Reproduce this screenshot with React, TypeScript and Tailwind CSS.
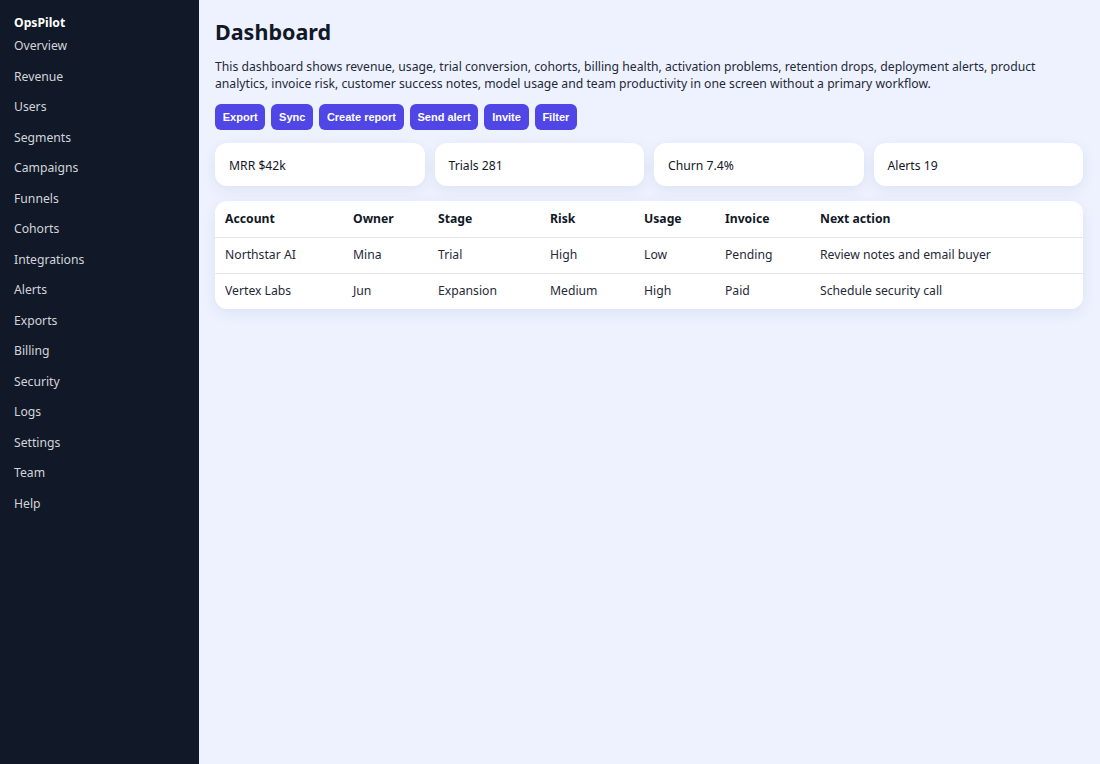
import React from "react";

const navItems = [
  "Overview",
  "Revenue",
  "Users",
  "Segments",
  "Campaigns",
  "Funnels",
  "Cohorts",
  "Integrations",
  "Alerts",
  "Exports",
  "Billing",
  "Security",
  "Logs",
  "Settings",
  "Team",
  "Help",
];

const actions = ["Export", "Sync", "Create report", "Send alert", "Invite", "Filter"];

const stats = ["MRR $42k", "Trials 281", "Churn 7.4%", "Alerts 19"];

// header label + column width (last one takes the rest)
const columns: [string, string][] = [
  ["Account", "w-[128px]"],
  ["Owner", "w-[85px]"],
  ["Stage", "w-[112px]"],
  ["Risk", "w-[94px]"],
  ["Usage", "w-[81px]"],
  ["Invoice", "w-[95px]"],
  ["Next action", ""],
];

const rows = [
  ["Northstar AI", "Mina", "Trial", "High", "Low", "Pending", "Review notes and email buyer"],
  ["Vertex Labs", "Jun", "Expansion", "Medium", "High", "Paid", "Schedule security call"],
];

function Sidebar() {
  return (
    <aside className="w-[199px] shrink-0 bg-[#111827] px-[14px] pt-[14px] text-[#e5e7eb]">
      <div className="text-[12.2px] font-bold leading-[18px] text-white">OpsPilot</div>
      <nav className="mt-[2px] flex flex-col">
        {navItems.map((item) => (
          <a key={item} href="#" className="block h-[30.53px] pt-[2px] text-[12.2px] leading-[20px] text-[#d1d5db]">
            {item}
          </a>
        ))}
      </nav>
    </aside>
  );
}

export default function App() {
  return (
    <div className="flex min-h-[764px] font-['Noto_Sans',sans-serif] text-[#111827]">
      <Sidebar />
      <main className="flex-1 bg-[#eef2ff] pl-[16px] pr-[17px] pt-[17px]">
        <h1 className="text-[21.5px] font-bold leading-[30px]">Dashboard</h1>
        <p className="mt-[11px] text-[12.2px] leading-[17px] text-[#1f2937]">
          This dashboard shows revenue, usage, trial conversion, cohorts, billing health, activation problems, retention
          drops, deployment alerts, product analytics, invoice risk, customer success notes, model usage and team
          productivity in one screen without a primary workflow.
        </p>
        <div className="mt-[12px] flex gap-[6px]">
          {actions.map((a) => (
            <button
              key={a}
              className="h-[26px] rounded-[6px] bg-[#4f46e5] px-[7.75px] font-['Liberation_Sans',Arial,sans-serif] text-[11px] font-bold text-white"
            >
              {a}
            </button>
          ))}
        </div>
        <div className="mt-[13px] grid grid-cols-4 gap-[10px]">
          {stats.map((s) => (
            <div
              key={s}
              className="flex h-[43px] items-center rounded-[12px] bg-white px-[14px] pt-[3px] text-[12.2px] shadow-[0_4px_14px_rgba(30,41,99,0.08)]"
            >
              {s}
            </div>
          ))}
        </div>
        <div className="mt-[15px] overflow-hidden rounded-[12px] bg-white shadow-[0_4px_14px_rgba(30,41,99,0.08)]">
          <table className="w-full table-fixed border-collapse text-left text-[12.2px]">
            <thead>
              <tr className="h-[36px]">
                {columns.map(([c, w]) => (
                  <th key={c} className={`${w} px-[10px] font-bold`}>
                    {c}
                  </th>
                ))}
              </tr>
            </thead>
            <tbody>
              {rows.map((r) => (
                <tr key={r[0]} className="h-[36px] border-t border-[#e5e7eb]">
                  {r.map((cell, i) => (
                    <td key={i} className="px-[10px] text-[#1f2937]">
                      {cell}
                    </td>
                  ))}
                </tr>
              ))}
            </tbody>
          </table>
        </div>
      </main>
    </div>
  );
}
